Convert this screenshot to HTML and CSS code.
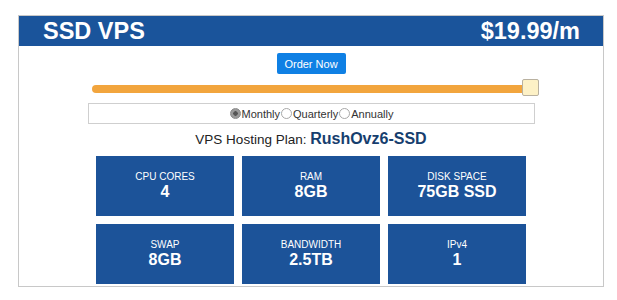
FILE: index.html
```html
<!DOCTYPE html>
<html lang="en">
  <head>
    <meta charset="UTF-8" />
    <meta name="viewport" content="width=device-width, initial-scale=1.0" />
    <title>SSD VPS</title>
    <link rel="stylesheet" href="styles.css">
  </head>
  <body>
    <div class="panel">
      <div class="panel-head">
        <span>SSD VPS</span>
        <span>$19.99/m</span>
      </div>

      <div class="order">
        <button type="button">Order Now</button>
      </div>

      <div class="slider">
        <div class="track"></div>
        <div class="handle"></div>
      </div>

      <div class="terms">
        <label><span class="radio checked"></span>Monthly</label>
        <label><span class="radio"></span>Quarterly</label>
        <label><span class="radio"></span>Annually</label>
      </div>

      <p class="plan">VPS Hosting Plan: <strong>RushOvz6-SSD</strong></p>

      <div class="specs">
        <div class="spec"><span>CPU CORES</span><b>4</b></div>
        <div class="spec"><span>RAM</span><b>8GB</b></div>
        <div class="spec"><span>DISK SPACE</span><b>75GB SSD</b></div>
        <div class="spec"><span>SWAP</span><b>8GB</b></div>
        <div class="spec"><span>BANDWIDTH</span><b>2.5TB</b></div>
        <div class="spec"><span>IPv4</span><b>1</b></div>
      </div>
    </div>
  </body>
</html>
```

FILE: styles.css
```css
body {
  font-family: "Liberation Sans", Arial, sans-serif;
  margin: 0;
  background: #fff;
}
.panel {
  width: 584px;
  height: 270px;
  margin: 15px 0 0 18px;
  border: 1px solid #c8c8c8;
}
.panel-head {
  display: flex;
  justify-content: space-between;
  align-items: center;
  height: 30px;
  padding: 0 23px 0 24px;
  background-color: #1a549b;
  color: #fff;
  font-size: 23.5px;
  font-weight: bold;
}
.order {
  display: flex;
  justify-content: center;
  margin-top: 7px;
}
.order button {
  width: 69px;
  height: 21px;
  padding: 0;
  background-color: #0f80e4;
  color: #fff;
  border: none;
  border-radius: 2px;
  font-family: inherit;
  font-size: 11px;
}
.slider {
  position: relative;
  width: 438px;
  height: 18px;
  margin: 5px auto 0;
}
.track {
  position: absolute;
  left: 0;
  right: 0;
  top: 6px;
  height: 8px;
  border-radius: 4px;
  background-color: #f2a53d;
}
.handle {
  position: absolute;
  right: -9px;
  top: 0;
  width: 15px;
  height: 15px;
  border: 1px solid #b9b1a0;
  border-radius: 2px;
  background-color: #fdf1c6;
}
.terms {
  display: flex;
  justify-content: center;
  align-items: center;
  width: 445px;
  height: 19px;
  margin: 6px auto 0;
  border: 1px solid #cfcfcf;
  font-size: 11px;
  color: #333;
}
.terms label {
  display: flex;
  align-items: center;
}
.radio {
  width: 9px;
  height: 9px;
  margin: 0 1px 0 1px;
  border: 1px solid #a8a8a8;
  border-radius: 50%;
  background: #fff;
}
.radio.checked {
  background: radial-gradient(circle, #555 0 2px, #9a9a9a 2.5px);
  border-color: #8a8a8a;
}
.plan {
  margin: 5px 0 0;
  height: 20px;
  line-height: 20px;
  text-align: center;
  font-size: 13.5px;
  color: #222;
}
.plan strong {
  color: #163e6e;
  font-size: 16px;
}
.specs {
  display: grid;
  grid-template-columns: repeat(3, 138px);
  grid-auto-rows: 60px;
  gap: 8px;
  justify-content: center;
  margin-top: 7px;
}
.spec {
  display: flex;
  flex-direction: column;
  justify-content: center;
  align-items: center;
  background-color: #1c5399;
  color: #fff;
  padding-bottom: 2px;
}
.spec span {
  font-size: 10px;
  line-height: 13px;
}
.spec b {
  font-size: 16px;
  line-height: 18px;
}
```
